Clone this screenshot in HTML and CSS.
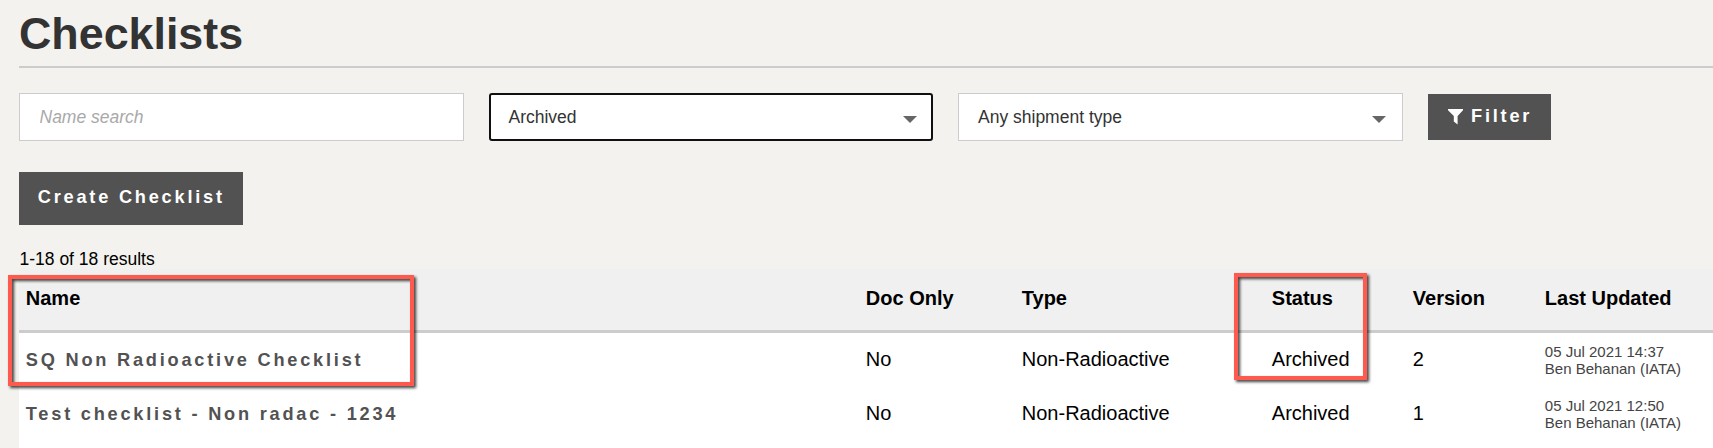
FILE: index.html
```html
<!DOCTYPE html>
<html lang="en">
<head>
<meta charset="utf-8">
<title>Checklists</title>
<link rel="stylesheet" href="styles.css">
</head>
<body>
<main class="page">
  <h1 class="title">Checklists</h1>
  <form class="filters">
    <input class="field search" type="text" placeholder="Name search" aria-label="Name search">
    <div class="field select focused"><span>Archived</span><svg class="caret" viewBox="0 0 14 7"><path d="M0 0h14L7 7z"/></svg></div>
    <div class="field select"><span>Any shipment type</span><svg class="caret" viewBox="0 0 14 7"><path d="M0 0h14L7 7z"/></svg></div>
    <button class="btn filter" type="button"><svg class="funnel" viewBox="0 0 15 16"><path d="M0 0h15v1.2L9.6 7v8.6L5.8 12.600V7L0 1.200z"/></svg><span>Filter</span></button>
  </form>
  <button class="btn create" type="button">Create Checklist</button>
  <p class="count">1-18 of 18 results</p>
  <div class="results">
    <table class="list">
      <colgroup><col class="c-name"><col class="c-doc"><col class="c-type"><col class="c-status"><col class="c-version"><col></colgroup>
      <thead>
        <tr><th>Name</th><th>Doc Only</th><th>Type</th><th>Status</th><th>Version</th><th>Last Updated</th></tr>
      </thead>
      <tbody>
        <tr><td><a class="link">SQ Non Radioactive Checklist</a></td><td>No</td><td>Non-Radioactive</td><td>Archived</td><td>2</td><td class="updated">05 Jul 2021 14:37<br>Ben Behanan (IATA)</td></tr>
        <tr><td><a class="link">Test checklist - Non radac - 1234</a></td><td>No</td><td>Non-Radioactive</td><td>Archived</td><td>1</td><td class="updated">05 Jul 2021 12:50<br>Ben Behanan (IATA)</td></tr>
      </tbody>
    </table>
  </div>
</main>
<div class="callout callout-name"></div>
<div class="callout callout-status"></div>
</body>
</html>
```

FILE: styles.css
```css
* { box-sizing: border-box; }
body {
  margin: 0;
  height: 448px;
  overflow: hidden;
  position: relative;
  background: #f3f2ee;
  color: #000;
  font-family: "Liberation Sans", Arial, sans-serif;
}
.page { padding-left: 19px; height: 448px; display: flex; flex-direction: column; }
.title {
  margin: 0;
  height: 68px;
  padding-top: 8px;
  border-bottom: 2px solid #ccc;
  font-size: 44.8px;
  line-height: 51px;
  color: #333;
}
.filters { display: flex; align-items: center; gap: 25px; margin-top: 25px; height: 48px; }
.field {
  width: 445px;
  height: 48px;
  border: 1px solid #ccc;
  background: #fff;
  padding: 0 19.5px;
  font: 17.5px "Liberation Sans", Arial, sans-serif;
  color: #333;
}
.search::placeholder { color: #a9a9a9; font-style: italic; opacity: 1; }
.select { display: flex; align-items: center; justify-content: space-between; padding: 0 16px 0 19px; }
.focused { width: 444px; border: 2px solid #101010; border-radius: 3px; padding: 0 14px 0 17.5px; }
.caret { width: 14px; height: 7px; fill: #666; margin-top: 4px; }
.btn {
  border: 0;
  background: #525252;
  color: #fff;
  font: bold 18.2px "Liberation Sans", Arial, sans-serif;
  letter-spacing: 2.78px;
  white-space: nowrap;
}
.filter { display: flex; align-items: center; width: 123px; height: 46px; padding: 0 0 1px 20px; gap: 8px; }
.funnel { width: 15px; height: 16px; fill: #fff; margin-top: 1px; }
.create { width: 224px; height: 53px; margin-top: 31px; padding: 0 0 2px 18.8px; text-align: left; }
.count { margin: 24px 0 0; height: 20px; line-height: 20px; font-size: 17.5px; padding-left: 0.5px; }
.results { flex: 1; background: #fff; }
.list { width: 1694px; table-layout: fixed; border-collapse: separate; border-spacing: 0; font-size: 20px; }
.c-name { width: 840px; }
.c-doc { width: 156px; }
.c-type { width: 250px; }
.c-status { width: 141px; }
.c-version { width: 132px; }
.list th, .list td { text-align: left; padding: 0 0 0 6.8px; }
.list th { height: 64px; padding-bottom: 2px; background: #f0f0f0; border-bottom: 3px solid #ccc; }
.list td { height: 54px; padding-bottom: 2px; }
.link { font-size: 18.2px; font-weight: bold; letter-spacing: 2.78px; color: #525252; }
.list .updated { padding-bottom: 0; font-size: 15px; line-height: 17px; color: #444; }
.callout { position: absolute; border: 4px solid #ff5a4d; filter: drop-shadow(2px 2px 1.5px rgba(0, 0, 0, .75)); }
.callout-name { left: 8px; top: 275px; width: 406px; height: 111px; }
.callout-status { left: 1234px; top: 273px; width: 133px; height: 107px; }
```
